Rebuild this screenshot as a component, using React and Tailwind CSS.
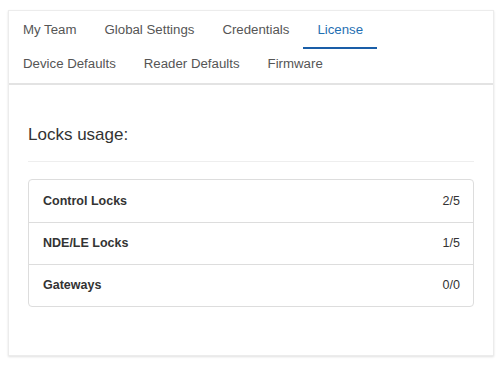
import React from 'react';

const tabs = [
    ['My Team', 'Global Settings', 'Credentials', 'License'],
    ['Device Defaults', 'Reader Defaults', 'Firmware'],
];

const rows = [
    { label: 'Control Locks', value: '2/5' },
    { label: 'NDE/LE Locks', value: '1/5' },
    { label: 'Gateways', value: '0/0' },
];

const App = () => {
    return (
        <div className="min-h-screen bg-white pt-[10px] pl-[8px] pr-[6px] font-['Liberation_Sans',Arial,sans-serif]">
            <div className="bg-white border border-[#ececec] shadow-[0_1px_2px_rgba(0,0,0,0.12)] h-[346px] flex flex-col">
                <div className="border-b-2 border-[#e3e3e3]">
                    {tabs.map((row, i) => (
                        <div key={i} className={`flex ${i === 0 ? 'h-[38px]' : 'h-[34px]'}`}>
                            {row.map((t) => {
                                const active = t === 'License';
                                return (
                                    <div
                                        key={t}
                                        className={`px-[14px] text-[13.25px] flex items-center border-b-2 ${
                                            active ? 'text-[#1f6fb2] border-[#1a5ea8]' : 'text-[#555] border-transparent'
                                        } ${i === 0 ? 'pt-[1px]' : 'pb-[2px]'}`}
                                    >
                                        {t}
                                    </div>
                                );
                            })}
                        </div>
                    ))}
                </div>

                <div className="px-[19px] pt-[38px]">
                    <h4 className="text-[17px] leading-[24px] text-[#333]">Locks usage:</h4>
                    <div className="mt-[14px] border-t border-[#eeeeee]" />
                    <div className="mt-[17px] border border-[#dddddd] rounded-[4px]">
                        {rows.map((r, i) => (
                            <div
                                key={r.label}
                                className={`h-[42px] flex items-center justify-between pl-[14px] pr-[13px] text-[12.5px] text-[#333] ${
                                    i > 0 ? 'border-t border-[#dddddd]' : ''
                                }`}
                            >
                                <span className="font-bold">{r.label}</span>
                                <span>{r.value}</span>
                            </div>
                        ))}
                    </div>
                </div>
            </div>
        </div>
    );
};

export default App;
